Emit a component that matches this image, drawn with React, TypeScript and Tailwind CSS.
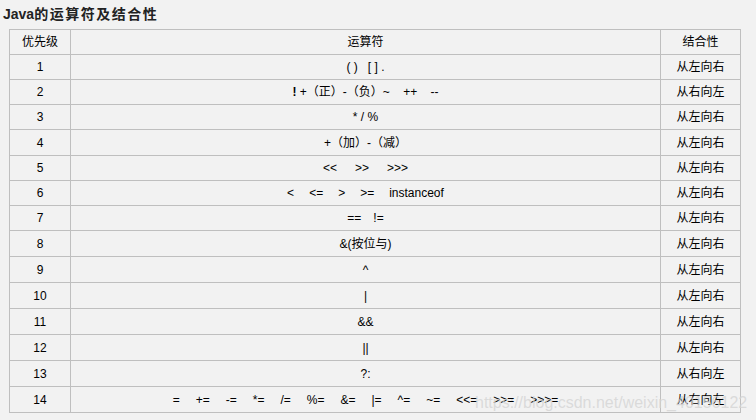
import React from "react";

type Row = { n: string; op: React.ReactNode; a: string; h: string };

const gapRow = (tokens: string[], gap: string) => (
  <div className={`flex items-center ${gap}`}>
    {tokens.map((t, i) => (
      <span key={i} className="whitespace-pre">
        {t}
      </span>
    ))}
  </div>
);

const L = "从左向右";
const R = "从右向左";

const rows: Row[] = [
  {
    n: "1",
    op: <span className="whitespace-pre">{"( )   [ ] ."}</span>,
    a: L,
    h: "h-[25px]",
  },
  {
    n: "2",
    op: (
      <span className="whitespace-pre">
        <span className="font-bold">!</span>
        {" +（正）-（负）~    ++    --"}
      </span>
    ),
    a: R,
    h: "h-[25px]",
  },
  { n: "3", op: <span className="whitespace-pre">{"* / %"}</span>, a: L, h: "h-[25px]" },
  { n: "4", op: <span className="whitespace-pre">{"+（加）-（减）"}</span>, a: L, h: "h-[26px]" },
  { n: "5", op: gapRow(["<<", ">>", ">>>"], "gap-[18px]"), a: L, h: "h-[25px]" },
  { n: "6", op: gapRow(["<", "<=", ">", ">=", "instanceof"], "gap-[15px]"), a: L, h: "h-[25px]" },
  { n: "7", op: gapRow(["==", "!="], "gap-[12px]"), a: L, h: "h-[25px]" },
  { n: "8", op: <span className="whitespace-pre">{"&(按位与)"}</span>, a: L, h: "h-[26px]" },
  { n: "9", op: <span>^</span>, a: L, h: "h-[26px]" },
  { n: "10", op: <span>|</span>, a: L, h: "h-[26px]" },
  { n: "11", op: <span>&amp;&amp;</span>, a: L, h: "h-[26px]" },
  { n: "12", op: <span>||</span>, a: L, h: "h-[26px]" },
  { n: "13", op: <span>?:</span>, a: R, h: "h-[26px]" },
  {
    n: "14",
    op: gapRow(
      ["=", "+=", "-=", "*=", "/=", "%=", "&=", "|=", "^=", "~=", "<<=", ">>=", ">>>="],
      "gap-[16px]"
    ),
    a: R,
    h: "h-[26px]",
  },
];

export default function App() {
  return (
    <div
      className="relative w-[756px] h-[420px] bg-[#f2f2f2] text-black overflow-hidden"
      style={{ fontFamily: '"Liberation Sans", Arial, "Noto Sans CJK SC", sans-serif' }}
    >
      <div className="h-[29px] flex items-center pl-[3px] text-[14px] font-bold text-[#222]">
        <span>Java</span>
        <span className="tracking-[1.5px]">的运算符及结合性</span>
      </div>
      <div className="ml-[9px] w-[732px] border-l border-t border-[#bfbfbf] text-[12px]">
        <div className="flex h-[25px] border-b border-[#bfbfbf]">
          <div className="w-[61px] border-r border-[#bfbfbf] flex items-center justify-center">优先级</div>
          <div className="w-[590px] border-r border-[#bfbfbf] flex items-center justify-center">运算符</div>
          <div className="w-[80px] border-r border-[#bfbfbf] flex items-center justify-center">结合性</div>
        </div>
        {rows.map((r) => (
          <div key={r.n} className={`flex ${r.h} border-b border-[#bfbfbf]`}>
            <div className="w-[61px] border-r border-[#bfbfbf] flex items-center justify-center">{r.n}</div>
            <div className="w-[590px] border-r border-[#bfbfbf] flex items-center justify-center">{r.op}</div>
            <div className="w-[80px] border-r border-[#bfbfbf] flex items-center justify-center">{r.a}</div>
          </div>
        ))}
      </div>
      <div className="absolute left-[475px] top-[391px] text-[16px] text-[#d4d4d4]/80 whitespace-nowrap pointer-events-none">
        https://blog.csdn.net/weixin_40156122
      </div>
    </div>
  );
}
